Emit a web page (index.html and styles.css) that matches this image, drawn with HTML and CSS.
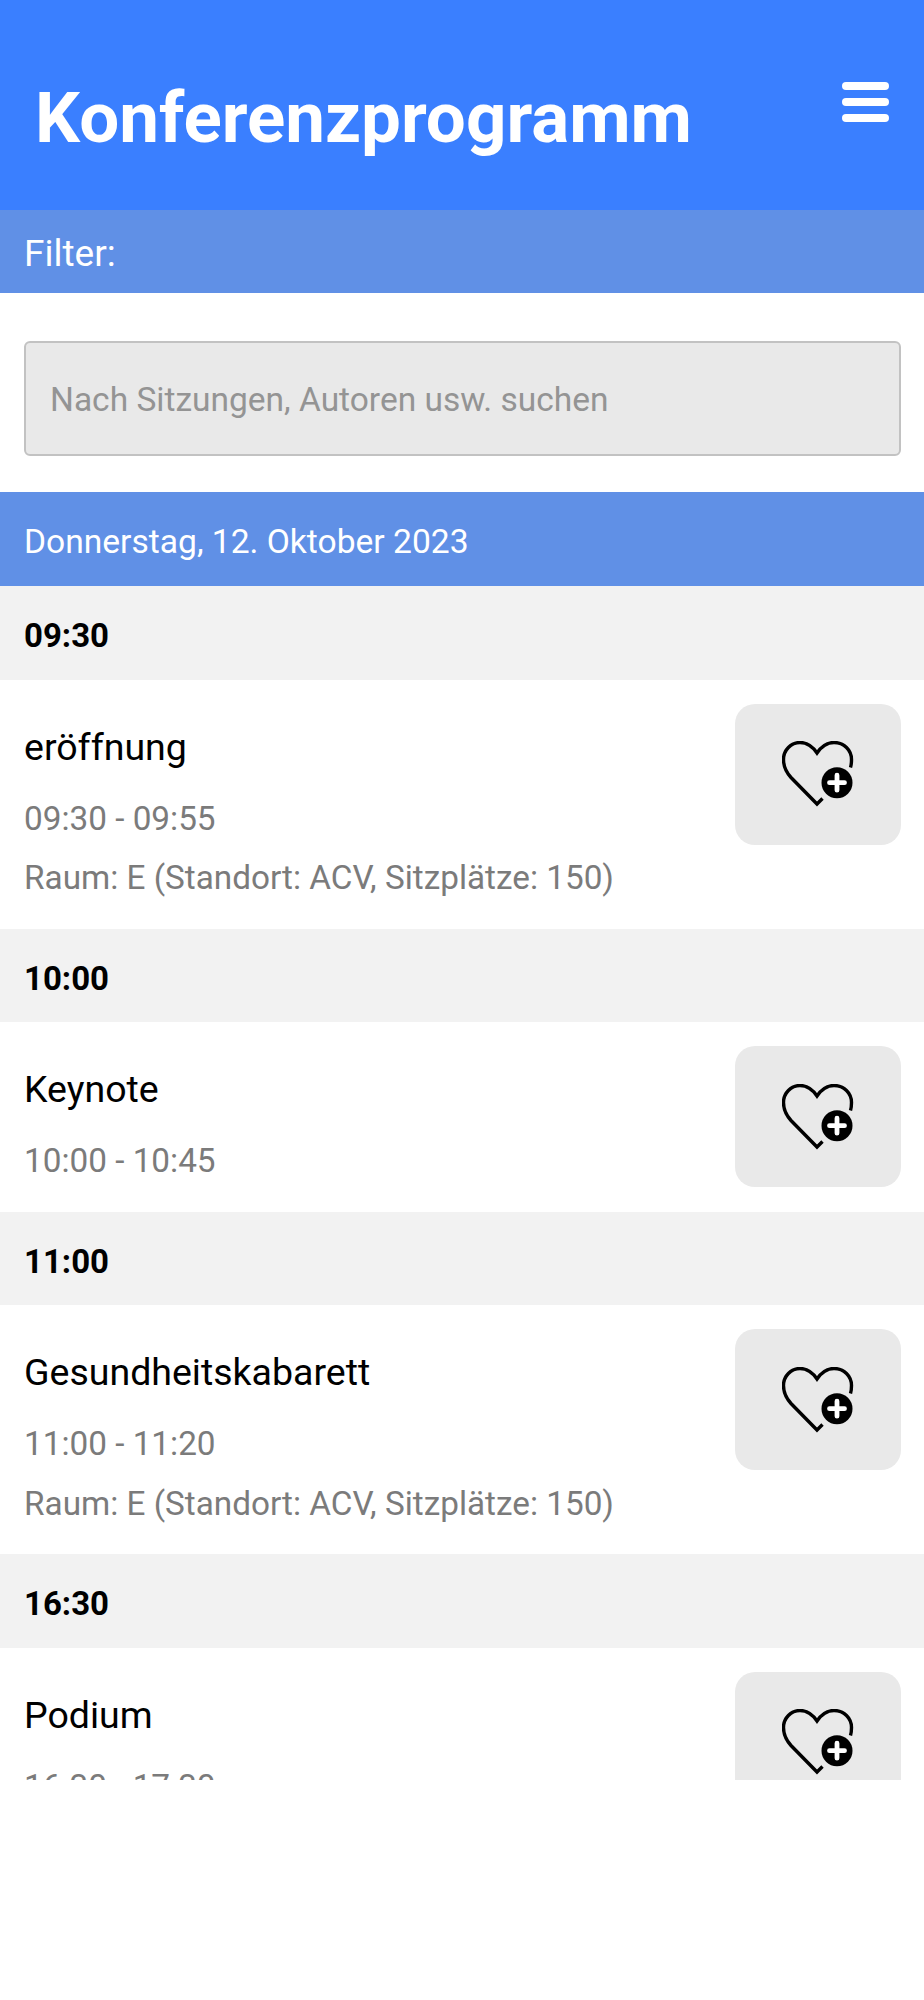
FILE: index.html
```html
<!DOCTYPE html>
<html lang="de">
<head>
<meta charset="utf-8">
<title>Konferenzprogramm</title>
<link rel="stylesheet" href="styles.css">
</head>
<body>
<svg class="defs" width="0" height="0" aria-hidden="true">
  <symbol id="heart-plus" viewBox="0 0 72 66">
    <path d="M40.5 57.5L35 63 9 36.5C3.5 30.5 1.5 24.5 1.5 18.5 1.5 9 9 1.5 18 1.5 25 1.5 31 6 35 12 39 6 45 1.5 52 1.5 62 1.5 69.5 9 69.5 18.5 69.5 21 69.3 24 68.5 26.5" fill="none" stroke="#000" stroke-width="3.4"/>
    <circle cx="55" cy="41.7" r="15.5" fill="#000"/>
    <path d="M47.5 41.7H62.5M55 34.2V49.2" stroke="#fff" stroke-width="4.8" stroke-linecap="round"/>
  </symbol>
</svg>
<div class="app">
  <header class="header">
    <h1 class="title">Konferenzprogramm</h1>
    <button class="menu" aria-label="Menü"><span></span><span></span><span></span></button>
  </header>
  <div class="filter-bar">Filter:</div>
  <div class="search-wrap">
    <input class="search" type="text" placeholder="Nach Sitzungen, Autoren usw. suchen">
  </div>
  <div class="date-bar">Donnerstag, 12. Oktober 2023</div>

  <div class="time">09:30</div>
  <div class="item">
    <div class="info">
      <div class="name">eröffnung</div>
      <div class="meta">09:30 - 09:55</div>
      <div class="meta">Raum: E (Standort: ACV, Sitzplätze: 150)</div>
    </div>
    <button class="fav" aria-label="Merken"><svg class="fav-icon"><use href="#heart-plus"/></svg></button>
  </div>

  <div class="time">10:00</div>
  <div class="item">
    <div class="info">
      <div class="name">Keynote</div>
      <div class="meta">10:00 - 10:45</div>
    </div>
    <button class="fav" aria-label="Merken"><svg class="fav-icon"><use href="#heart-plus"/></svg></button>
  </div>

  <div class="time">11:00</div>
  <div class="item">
    <div class="info">
      <div class="name">Gesundheitskabarett</div>
      <div class="meta">11:00 - 11:20</div>
      <div class="meta">Raum: E (Standort: ACV, Sitzplätze: 150)</div>
    </div>
    <button class="fav" aria-label="Merken"><svg class="fav-icon"><use href="#heart-plus"/></svg></button>
  </div>

  <div class="time">16:30</div>
  <div class="item">
    <div class="info">
      <div class="name">Podium</div>
      <div class="meta">16:30 - 17:30</div>
    </div>
    <button class="fav" aria-label="Merken"><svg class="fav-icon"><use href="#heart-plus"/></svg></button>
  </div>
</div>
</body>
</html>
```
FILE: styles.css
```css
* { box-sizing: border-box; }
html, body { margin: 0; padding: 0; background: #fff; }
body { font-family: Roboto, "Liberation Sans", sans-serif; color: #000; }
.defs { position: absolute; }
.app { height: 1780px; overflow: hidden; }

.header {
  height: 210px;
  background: #3a7fff;
  display: flex;
  justify-content: space-between;
  align-items: flex-start;
  padding: 80px 35px 0 35px;
}
.title { margin: 0; color: #fff; font-size: 70.9px; line-height: 76px; font-weight: 700; }
.menu {
  width: 47px;
  margin-top: 2px;
  border: 0;
  padding: 0;
  background: none;
  display: flex;
  flex-direction: column;
  gap: 8px;
}
.menu span { display: block; height: 8px; border-radius: 4px; background: #fff; }

.filter-bar {
  height: 83px;
  background: #6090e6;
  color: #fff;
  font-size: 37px;
  line-height: 78px;
  padding: 5px 0 0 24px;
}
.search-wrap { padding: 48px 23px 36px 24px; }
.search {
  display: block;
  width: 100%;
  height: 115px;
  padding: 2px 24px 0;
  background: #e9e9e9;
  border: 2px solid #c2c2c2;
  border-radius: 6px;
  font-family: inherit;
  font-size: 33.5px;
}
.search::placeholder { color: #949494; opacity: 1; }

.date-bar {
  height: 94.3px;
  background: #6090e6;
  color: #fff;
  font-size: 33.6px;
  line-height: 89px;
  padding: 5px 0 0 24px;
}
.time {
  height: 93.7px;
  background: #f2f2f2;
  font-size: 33px;
  font-weight: 700;
  line-height: 89px;
  padding: 5px 0 0 24px;
}
.item {
  display: flex;
  justify-content: space-between;
  align-items: flex-start;
  padding: 24px 23px 21px 24px;
}
.info { padding-top: 22px; }
.name { font-size: 37.5px; line-height: 42px; margin-bottom: 21px; }
.meta { font-size: 33.3px; line-height: 59.3px; color: #7b7b7b; }
.fav {
  flex: none;
  width: 166px;
  height: 141px;
  border: 0;
  padding: 0;
  border-radius: 20px;
  background: #e9e9e9;
  display: flex;
  align-items: center;
  justify-content: center;
}
.fav-icon { width: 72px; height: 66px; display: block; }
```
